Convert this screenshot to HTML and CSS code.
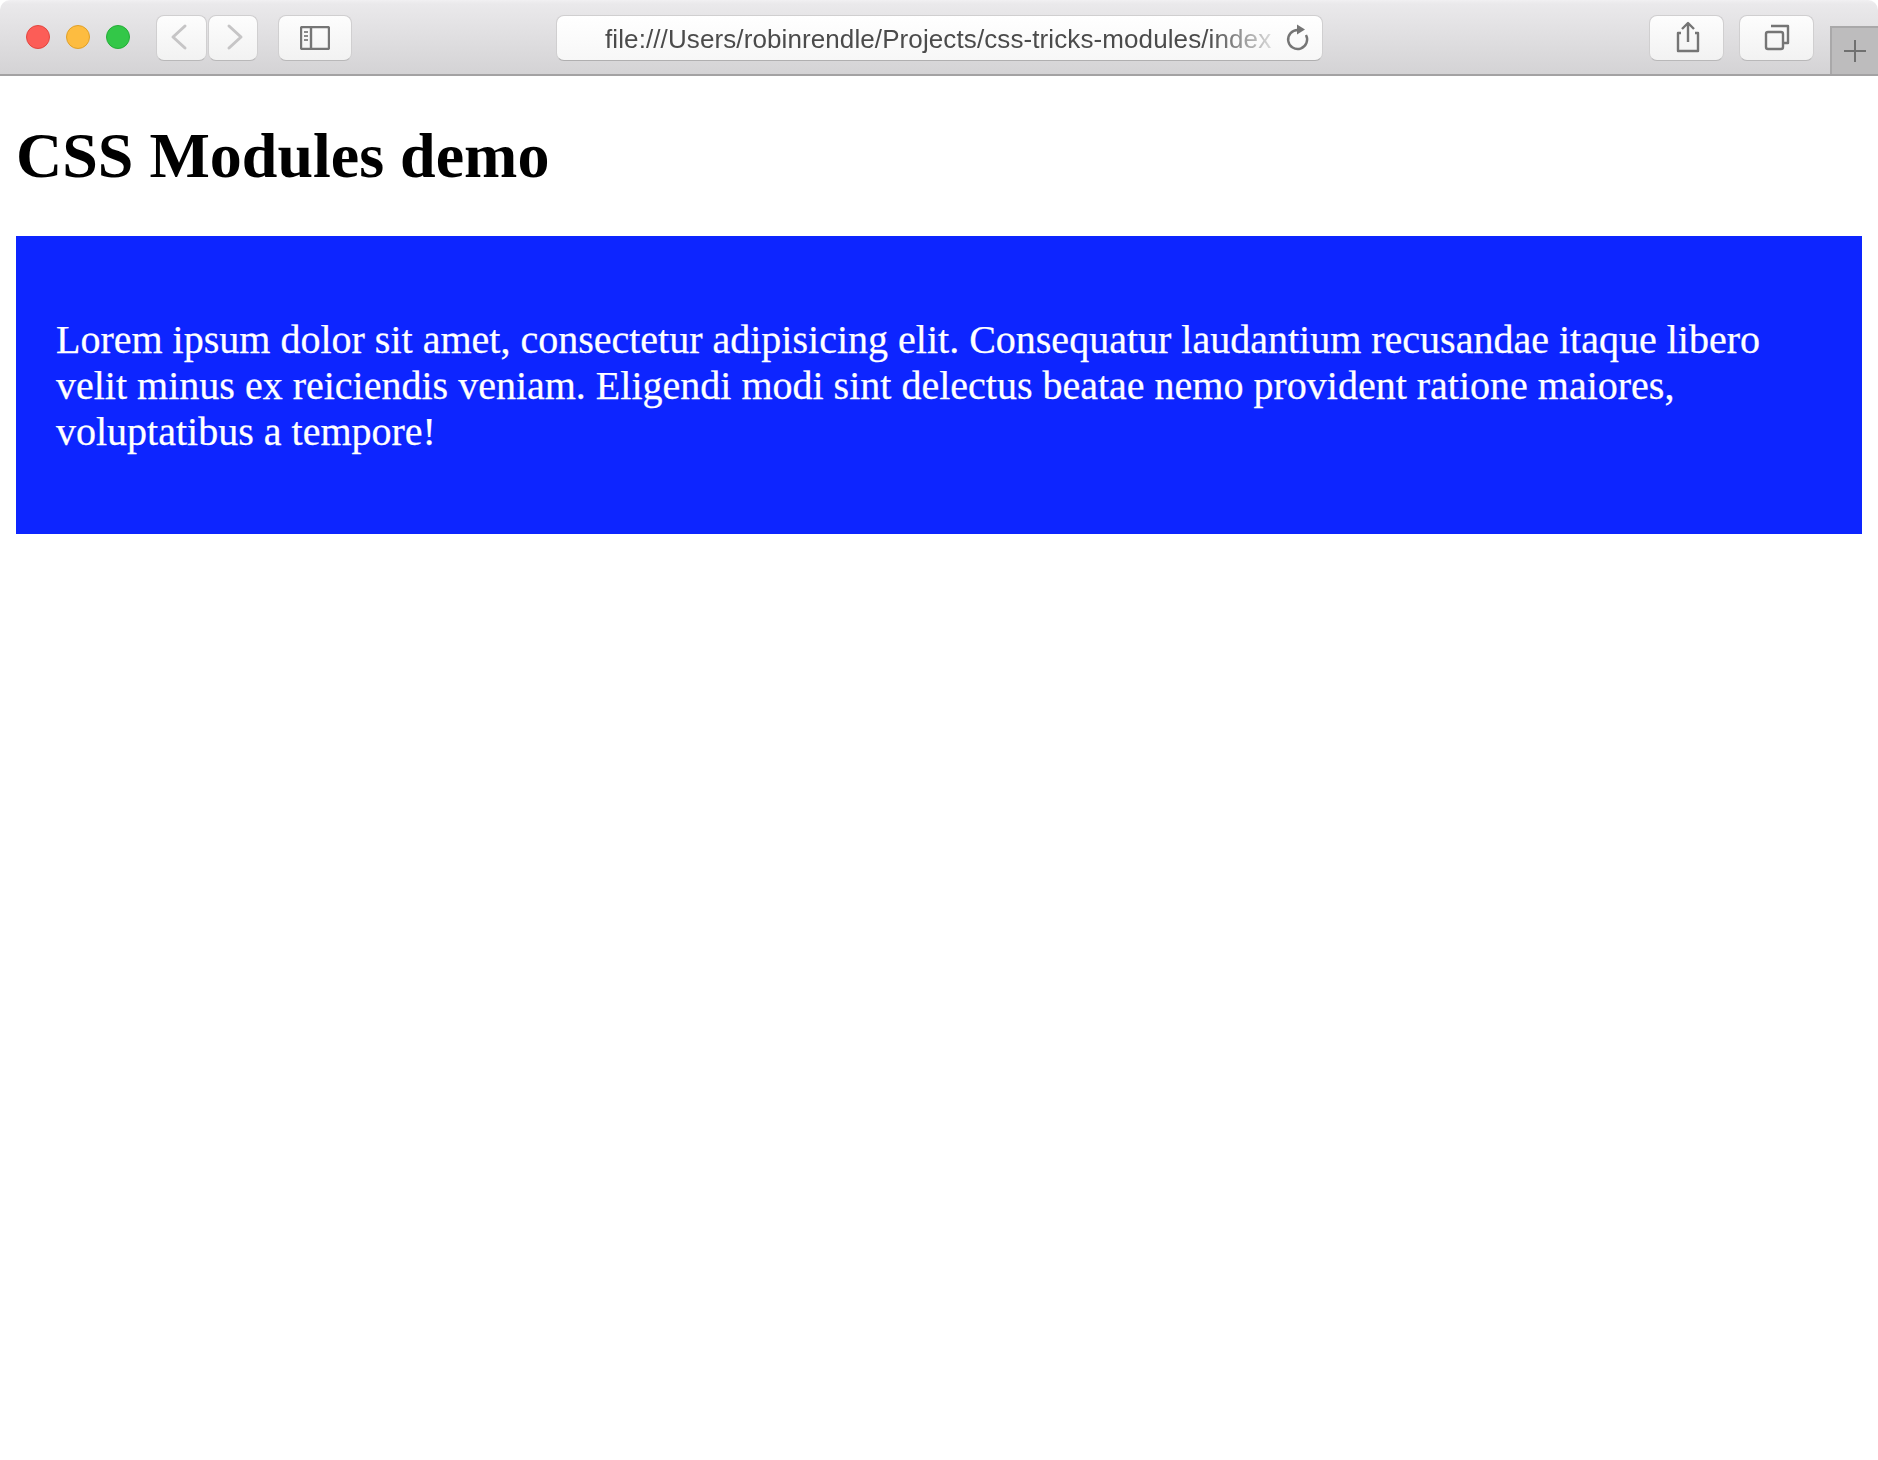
FILE: index.html
```html
<!DOCTYPE html>
<html lang="en">
<head>
<meta charset="utf-8">
<title>CSS Modules demo</title>
<link rel="stylesheet" href="styles.css">
</head>
<body>
<header class="toolbar">
  <div class="traffic">
    <span class="light light-red"></span>
    <span class="light light-yellow"></span>
    <span class="light light-green"></span>
  </div>
  <div class="nav">
    <button class="btn btn-nav" type="button" aria-label="Back">
      <svg class="icon" width="51" height="44" viewBox="0 0 51 44"><path class="chev" d="M29 10 L17 21 L29 32"/></svg>
    </button>
    <button class="btn btn-nav" type="button" aria-label="Forward">
      <svg class="icon" width="50" height="44" viewBox="0 0 50 44"><path class="chev" d="M21 10 L33 21 L21 32"/></svg>
    </button>
  </div>
  <button class="btn btn-sidebar" type="button" aria-label="Sidebar">
    <svg class="icon" width="30" height="24" viewBox="0 0 30 24">
      <rect class="glyph" x="1" y="1" width="28" height="22" rx="1.5"/>
      <path class="glyph" d="M11 1 V23"/>
      <path class="glyph-thin" d="M4 6 H8 M4 10 H8 M4 14 H8"/>
    </svg>
  </button>
  <div class="url">
    <span class="url-text">file:///Users/robinrendle/Projects/css-tricks-modules/index</span>
    <svg class="icon reload" width="26" height="30" viewBox="0 0 26 30">
      <path class="glyph" d="M14 7 A9.5 9.5 0 1 0 22 12"/>
      <path class="glyph-fill" d="M13 1.5 L21 6.5 L13 11.5 Z"/>
    </svg>
  </div>
  <button class="btn btn-share" type="button" aria-label="Share">
    <svg class="icon" width="75" height="44" viewBox="0 0 75 44">
      <path class="glyph" d="M32 17 H29 V35 H49 V17 H46"/>
      <path class="glyph" d="M39 26 V7 M33 13 L39 7 L45 13"/>
    </svg>
  </button>
  <button class="btn btn-tabs" type="button" aria-label="Show tabs">
    <svg class="icon" width="75" height="44" viewBox="0 0 75 44">
      <rect class="glyph" x="27" y="16" width="17" height="17" rx="2"/>
      <path class="glyph" d="M32 10 H49 V27 H45"/>
    </svg>
  </button>
  <button class="newtab" type="button" aria-label="New tab">
    <svg class="icon" width="24" height="24" viewBox="0 0 24 24"><path class="plus" d="M12 1 V23 M1 12 H23"/></svg>
  </button>
</header>
<main class="page">
  <h1 class="title">CSS Modules demo</h1>
  <section class="panel">
    <p class="panel-text">Lorem ipsum dolor sit amet, consectetur adipisicing elit. Consequatur laudantium recusandae itaque libero velit minus ex reiciendis veniam. Eligendi modi sint delectus beatae nemo provident ratione maiores, voluptatibus a tempore!</p>
  </section>
</main>
</body>
</html>
```
FILE: styles.css
```css
* { box-sizing: border-box; }
html, body { margin: 0; padding: 0; background: #fff; }
body { font-family: "Liberation Serif", serif; color: #000; }

.toolbar {
  display: flex;
  align-items: flex-start;
  height: 76px;
  padding-top: 15px;
  background: linear-gradient(#f1f0f2 0, #eae9eb 4px, #d4d3d5 100%);
  border-bottom: 2px solid #a3a2a3;
  border-radius: 10px 10px 0 0;
}
.traffic { display: flex; gap: 16px; margin: 10px 0 0 26px; }
.light { width: 24px; height: 24px; border-radius: 50%; border: 1px solid; }
.light-red { background: #fc5d57; border-color: #e2463f; }
.light-yellow { background: #fdbc40; border-color: #e0a028; }
.light-green { background: #33c748; border-color: #25ad38; }

.btn {
  display: flex;
  align-items: center;
  justify-content: center;
  height: 46px;
  padding: 0;
  background: linear-gradient(#fdfdfd, #f2f2f2);
  border: 1px solid #d0cfd0;
  border-bottom-color: #b9b8b9;
  border-radius: 8px;
}
.icon { display: block; flex: none; }
.nav { display: flex; gap: 1px; margin-left: 26px; }
.btn-nav:first-child { width: 51px; }
.btn-nav:last-child { width: 50px; }
.btn-sidebar { width: 74px; margin-left: 20px; }
.btn-share { width: 75px; margin-left: 326px; }
.btn-tabs { width: 75px; margin-left: 15px; }

.chev { fill: none; stroke: #c6c5c6; stroke-width: 3; stroke-linecap: round; stroke-linejoin: round; }
.glyph { fill: none; stroke: #757575; stroke-width: 2.4; stroke-linejoin: round; }
.glyph-thin { fill: none; stroke: #8a8a8a; stroke-width: 2.2; }
.glyph-fill { fill: #757575; }
.plus { fill: none; stroke: #707070; stroke-width: 2; }

.url {
  display: flex;
  align-items: center;
  width: 767px;
  height: 46px;
  margin-left: 204px;
  padding: 0 12px 0 48px;
  background: linear-gradient(#fff, #f7f7f7);
  border: 1px solid #d0cfd0;
  border-bottom-color: #b0afb0;
  border-radius: 8px;
}
.url-text {
  flex: 1;
  min-width: 0;
  padding-top: 3px;
  overflow: hidden;
  white-space: nowrap;
  font: 26px "Liberation Sans", Arial, sans-serif;
  letter-spacing: 0.1px;
  color: #4b4b4b;
  -webkit-mask-image: linear-gradient(to right, #000 90%, rgba(0,0,0,0.12) 100%);
  mask-image: linear-gradient(to right, #000 90%, rgba(0,0,0,0.12) 100%);
}
.reload { margin-left: 8px; }

.newtab {
  display: flex;
  align-items: center;
  justify-content: center;
  align-self: flex-end;
  width: 48px;
  height: 48px;
  margin-left: 16px;
  padding: 0;
  background: #bdbcbd;
  border: 0;
  border-top: 2px solid #a9a8a9;
  border-left: 2px solid #a9a8a9;
}

.page { padding: 43px 16px 0; }
.title { margin: 0 0 43px; font-size: 64px; font-weight: 700; line-height: 74px; }
.panel { padding: 40px; background: #0d25ff; }
.panel-text { margin: 41px 0 39px; font-size: 40px; line-height: 46px; color: #fff; -webkit-text-stroke: 0.25px #fff; }
```
